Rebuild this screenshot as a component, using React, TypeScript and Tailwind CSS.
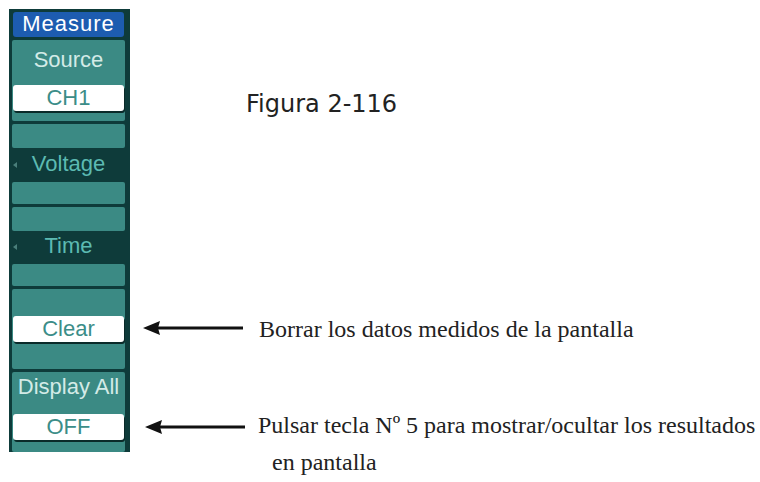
import React from "react";

const ui = { fontFamily: '"Liberation Sans", Arial, sans-serif' };
const serif = { fontFamily: '"Liberation Serif", "Times New Roman", serif' };

function ValueBox({ label }: { label: string }) {
  return (
    <div className="mx-[1px] flex h-[26px] items-center justify-center rounded-[3px] bg-white text-[22px] leading-none text-[#3b8d88] shadow-[1px_2px_0_#0a2a29]">
      {label}
    </div>
  );
}

function SubMenu({ label }: { label: string }) {
  return (
    <div className="flex h-[80px] flex-col">
      <div className="h-[24px] rounded-[2px] bg-[#3b8a84]" />
      <div className="relative flex flex-1 items-center justify-center pb-[2px] text-[22px] leading-none text-[#5cbab2]">
        <span className="absolute left-[1px] top-1/2 -mt-[3px] h-0 w-0 border-y-[3.5px] border-r-[4px] border-y-transparent border-r-[#4a7f7b]" />
        {label}
      </div>
      <div className="h-[22px] rounded-[2px] bg-[#3b8a84]" />
    </div>
  );
}

function Arrow() {
  return (
    <svg width="100" height="14" viewBox="0 0 100 14">
      <line x1="12" y1="7" x2="100" y2="7" stroke="#111" strokeWidth="3" />
      <path d="M0 7 L17 0 L15 7 L17 14 Z" fill="#111" />
    </svg>
  );
}

export default function App() {
  return (
    <div className="flex h-[482px] w-[760px] bg-white">
      {/* Menú del osciloscopio */}
      <div
        style={ui}
        className="ml-[9px] mt-[9px] flex h-[443px] w-[121px] flex-col gap-[3px] bg-[#0e3b3a] pl-[3px] pr-[5px] pt-[3px]"
      >
        <div className="mx-[1px] flex h-[25px] items-center justify-center rounded-[3px] bg-[#1d5cb0] text-[22px] leading-none tracking-[1px] text-white">
          Measure
        </div>

        <div className="flex h-[81px] flex-col rounded-[2px] bg-[#3b8a84] pt-[8px]">
          <div className="text-center text-[22px] leading-[24px] text-[#d3ebe7]">Source</div>
          <div className="mt-[13px]">
            <ValueBox label="CH1" />
          </div>
        </div>

        <SubMenu label="Voltage" />
        <SubMenu label="Time" />

        <div className="flex h-[80px] flex-col justify-center rounded-[2px] bg-[#3b8a84]">
          <ValueBox label="Clear" />
        </div>

        <div className="flex h-[80px] flex-col rounded-[2px] bg-[#3b8a84] pt-[3px]">
          <div className="text-center text-[22px] leading-[24px] text-[#d3ebe7]">Display All</div>
          <div className="mt-[15px]">
            <ValueBox label="OFF" />
          </div>
        </div>
      </div>

      {/* Anotaciones */}
      <div className="flex flex-col pt-[92px]">
        <div
          style={{ fontFamily: '"DejaVu Sans", Verdana, sans-serif' }}
          className="ml-[116px] text-[24px] leading-[24px] text-[#222]"
        >
          Figura 2-116
        </div>

        <div className="ml-[13px] mt-[201px] flex items-start" style={serif}>
          <div className="mt-[4px]">
            <Arrow />
          </div>
          <div className="ml-[16px] text-[24px] leading-[24px] text-[#222]">
            Borrar los datos medidos de la pantalla
          </div>
        </div>

        <div className="ml-[15px] mt-[72px] flex items-start" style={serif}>
          <div className="mt-[7px]">
            <Arrow />
          </div>
          <div className="ml-[13px] text-[24px] leading-[24px] text-[#222]">
            <div className="whitespace-nowrap">Pulsar tecla Nº 5 para mostrar/ocultar los resultados</div>
            <div className="ml-[14px] mt-[13px]">en pantalla</div>
          </div>
        </div>
      </div>
    </div>
  );
}
